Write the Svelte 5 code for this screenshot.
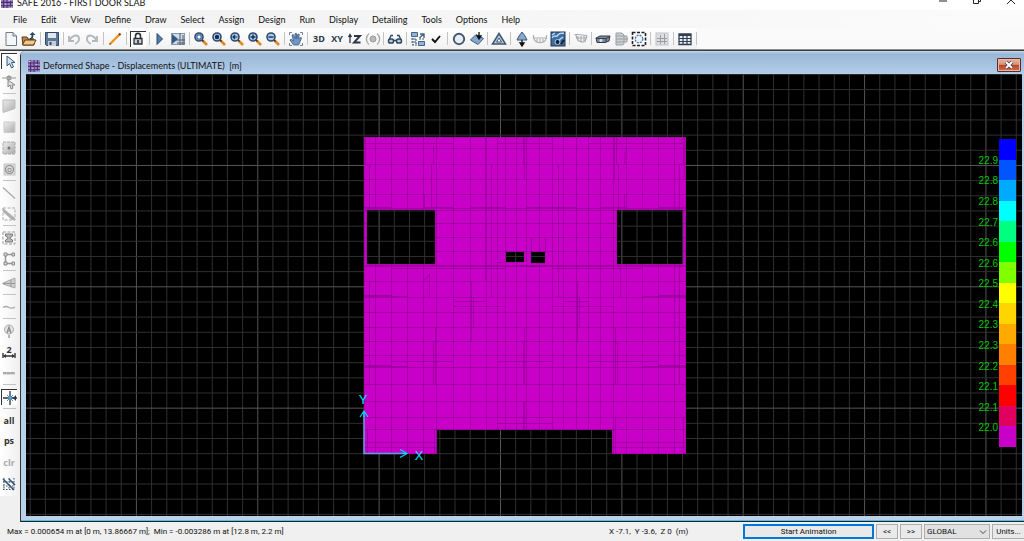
<script lang="ts">
	const menus = [
		'File', 'Edit', 'View', 'Define', 'Draw', 'Select', 'Assign', 'Design',
		'Run', 'Display', 'Detailing', 'Tools', 'Options', 'Help'
	];

	const lens = (inner: string) =>
		`<path d="M9.5 9.5L14 14" stroke="#e08a1e" stroke-width="2.6"/><path d="M8.5 8.5l2 2" stroke="#333" stroke-width="1.6"/><circle cx="6" cy="6" r="4" fill="#a9cdf0" stroke="#33476b" stroke-width="1.6"/>${inner}`;
	const word = (text: string, y: number, fill = '#2b3648', size = 9) =>
		`<text x="8" y="${y}" text-anchor="middle" font-family="Open Sans, sans-serif" font-weight="700" font-size="${size}" fill="${fill}">${text}</text>`;

	const icons: { [key: string]: string } = {
		grid: '<rect width="16" height="16" fill="#9a83bd"/><path d="M0 4h16M0 8.500h16M0 13h16M3.500 0v16M8 0v16M12.500 0v16" stroke="#4c2c72" stroke-width="1.400"/><path d="M1 2h3M10 6h3M5 11h3M11 15h4" stroke="#d7c9ea"/>',
		page: '<path d="M3 1.500h7l3.500 3.500v9.500H3z" fill="#f4f6f8" stroke="#6f7b88"/><path d="M10 1.500V5h3.500" fill="#cfd6de" stroke="#6f7b88"/>',
		open: '<path d="M1 6h5l1 2h6v6H2z" fill="#c48a45" stroke="#5b3b17"/><path d="M1.500 14L4 9h11l-2.500 5z" fill="#f3c987" stroke="#5b3b17"/><path d="M9 8c2 0 2.500-2 2.500-4" fill="none" stroke="#27465f" stroke-width="1.800"/><path d="M8.500 4L11.500 1l3 3z" fill="#27465f"/>',
		save: '<path d="M1.500 1.500h13v13h-12l-1-1z" fill="#5d7896" stroke="#33475f"/><path d="M4 2h8v5H4z" fill="#dfe8f0"/><path d="M4 10h8v5H4z" fill="#c3ced9"/><path d="M5.500 11h2v3h-2z" fill="#33475f"/>',
		undo: '<path d="M3 5v5h5M3.500 9.500C6 4 12 3 13 7c.6 3-2 5-4 6" fill="none" stroke="#b3b6ba" stroke-width="1.800"/>',
		redo: '<path d="M13 5v5H8M12.500 9.500C10 4 4 3 3 7c-.6 3 2 5 4 6" fill="none" stroke="#b3b6ba" stroke-width="1.800"/>',
		pencil: '<path d="M3 13L12.500 3.500" stroke="#ef9420" stroke-width="2.400"/><path d="M12 4l1.500-1.500" stroke="#8a3b20" stroke-width="2.400"/><path d="M2 14l2-1-1-1z" fill="#222"/>',
		lock: '<path d="M5.500 8V5c0-3.500 5-3.500 5 0v3" fill="none" stroke="#2b3038" stroke-width="1.600"/><path d="M4 7.500h8v5.500H4z" fill="#c9ccd0" stroke="#2b3038" stroke-width="1.300"/><path d="M8 9v3" stroke="#2b3038" stroke-width="1.600"/>',
		run: '<path d="M5 2.500l5.500 5.500L5 13.500z" fill="#4d7dad" stroke="#27496d"/>',
		runMesh: '<rect x="1.500" y="2.500" width="13" height="11" fill="#cfdbe8" stroke="#8496a8"/><path d="M10 2v12M6 9h9M13 4v10M7 12h8" stroke="#4a5b6e"/><path d="M2 3l6 5-6 5z" fill="#34587d"/>',
		zoomBox: lens('<path d="M4 4h4v4H4z" fill="#fff" stroke="#1d4f8b"/>'),
		zoomFull: lens('<circle cx="6" cy="6" r="2.200" fill="#142b4d"/>'),
		zoomBack: lens('<path d="M8.500 6H4M6 4L4 6l2 2" stroke="#16304f" fill="none" stroke-width="1.200"/>'),
		zoomIn: lens('<path d="M3.500 6h5M6 3.500v5" stroke="#16304f" stroke-width="1.400"/>'),
		zoomOut: lens('<path d="M3.500 6h5" stroke="#16304f" stroke-width="1.400"/>'),
		pan: '<path d="M1.500 4V1.500H4M12 1.500h2.500V4M14.500 12v2.500H12M4 14.500H1.500V12" fill="none" stroke="#77818c"/><path d="M5.500 14L2 9l1.200-.8L5.500 10 4 4l1.300-.4L7 7.500V2.500h1.500v5L10 3l1.300.4-.8 4.800L12.500 6l1 1L11.500 12l-1 2z" fill="#6f96c4" stroke="#3c5b84" stroke-width=".8"/>',
		three: word('3D', 11),
		xy: word('XY', 11),
		nz: '<path d="M3 12V4M1.500 6L3 3.500 4.500 6" fill="none" stroke="#2b3648" stroke-width="1.300"/><path d="M7 5h6l-6 6.500h6.500" fill="none" stroke="#2b3648" stroke-width="1.900"/>',
		rotate: '<path d="M4 2.500c-3.500 3-3.500 8 0 11M12 2.500c3.500 3 3.500 8 0 11" fill="none" stroke="#aaa" stroke-width="1.400"/><circle cx="8" cy="8" r="3" fill="#b9b9b9" stroke="#999"/>',
		glasses: '<path d="M2 9l2-4.500h2M14 9l-2-4.500h-2" fill="none" stroke="#31465f" stroke-width="1.400"/><path d="M6.500 9.500h3" stroke="#31465f" stroke-width="1.600"/><rect x="1.500" y="8" width="5" height="4" rx="1.800" fill="#b6cde4" stroke="#31465f" stroke-width="1.500"/><rect x="9.500" y="8" width="5" height="4" rx="1.800" fill="#b6cde4" stroke="#31465f" stroke-width="1.500"/>',
		objects: '<path d="M1.500 1.500h6v4h-6zM8.500 10.500h6v4h-6z" fill="#8fb4dc" stroke="#49637f"/><path d="M9.500 7l4-4M10 3h4v4" fill="none" stroke="#49637f" stroke-width="1.400"/><path d="M1 8h5M1 11h5M2 14h5M3 7v7M9 8h6M6 8v5" stroke="#49637f" stroke-width="1.200" stroke-dasharray="2 1"/>',
		check: '<path d="M4 8l3 3 5-6" fill="none" stroke="#111" stroke-width="1.900"/>',
		circle: '<circle cx="8" cy="8" r="5.200" fill="#e4edf6" stroke="#46586c" stroke-width="1.900"/>',
		slab: '<path d="M1.500 9L7 3.500l7.500 4L9 13.500z" fill="#86a9d1" stroke="#3f5d80"/><path d="M10 1v5M8 5l2 3 2-3z" fill="#111" stroke="#111" stroke-width="1.300"/>',
		triangle: '<path d="M8 2.500L14.500 13h-13z" fill="#b9cde2" stroke="#3f5670" stroke-width="1.500"/><path d="M8 7l2.500 4h-5z" fill="#fff" stroke="#3f5670"/>',
		reaction: '<path d="M8 1l3 4 2 4H3l2-4z" fill="#86a9d1" stroke="#3f5670"/><path d="M8 9v5M6 12l2 3 2-3z" fill="#111" stroke="#111" stroke-width="1.300"/>',
		moment: '<path d="M1.500 4v4M14.500 4v4M1 7h14M2 8c2 5 10 5 12 0M5 8v2.500M8 8v4M11 8v2.500" fill="none" stroke="#a9adb1" stroke-width="1.100"/>',
		contour: '<rect x="1" y="1" width="14" height="14" fill="#426c9d" stroke="#24374e"/><path d="M2 7c2-4 4 0 6-3s4-1 6-2M2 4l3-2M9 9l4-3" fill="none" stroke="#b7dcf6" stroke-width="1.400"/><circle cx="7.500" cy="11" r="2.500" fill="#0f2038" stroke="#a8d0ef"/><path d="M11 13l3-4" stroke="#0f2038" stroke-width="2"/>',
		strip: '<path d="M1.500 3.500h3l9 1v3M3 4c1 6 4 8 9 6.500l2-6M5 5v5M8 5v6M11 5v5M3 7h11" fill="none" stroke="#a9adb1" stroke-width="1.200"/>',
		beam: '<path d="M1 7l4-2h10l-1 5-4 1.500H2z" fill="#7d8c9c" stroke="#333d49"/><path d="M1 7.500h10l4-2M11 7.500v4" fill="none" stroke="#333d49"/><circle cx="6" cy="9.500" r="1.400" fill="#dce6ef"/>',
		stack: '<path d="M3 2h6l2 2v9l-2 1H3zM3 5h8M3 8h12M3 11h8M11 5h3v6h-3" fill="#cdd0d3" stroke="#9b9fa3"/>',
		region: '<rect x="1.500" y="1.500" width="13" height="13" fill="#fff" stroke="#222" stroke-width="1.600" stroke-dasharray="3 1.500"/><circle cx="8" cy="8" r="3.800" fill="#eaf2fb" stroke="#4b77b0" stroke-width="1.300" stroke-dasharray="2 1"/>',
		slabGrid: '<rect x="2" y="2" width="12" height="12" fill="#dcdee0" stroke="#c0c3c6"/><path d="M6.500 4v9M10.500 3v10M3 7.500h10M3 10.500h10" stroke="#999da1"/>',
		table: '<path d="M2 3h12v10.500H2z" fill="#e6edf5" stroke="#2f3f50" stroke-width="1.300"/><path d="M2 4h12" stroke="#2f3f50" stroke-width="2"/><path d="M2 7.500h12M2 10.500h12M6 4v9M10 4v9" stroke="#2f3f50" stroke-width="1.200"/>',

		pointer: '<path d="M5 2v10l2.500-2.500 2 4.500 2-1-2-4.500H13z" fill="#cfe3f7" stroke="#3d5878"/>',
		reshape: '<path d="M1 4h14M8 1v3M6 2.500h4v3H6z" fill="#ccc" stroke="#999"/><path d="M7 6v7l2-2 1 4 2-1-1-3h3z" fill="#ddd" stroke="#888"/>',
		quad: '<path d="M2 2h12v8.500L2 14.500z" fill="url(#side-fade)" stroke="#bbb"/>',
		rect: '<path d="M3 3h11v10.500H3z" fill="url(#side-fade)" stroke="#ccc"/>',
		rectDot: '<rect x="2" y="2" width="12" height="12" fill="url(#side-fade)" stroke="#aaa" stroke-dasharray="3 1"/><circle cx="8" cy="8" r="1.500" fill="#777"/>',
		rectCircle: '<rect x="3" y="3" width="11" height="11" fill="#d8d8d8" stroke="#c4c4c4"/><circle cx="8.500" cy="8.500" r="4" fill="none" stroke="#8d8d8d" stroke-width="1.200"/><path d="M7 7.500h3v3H7z" fill="none" stroke="#999"/>',
		line: '<path d="M2 2.500l12 11" stroke="#aaa" stroke-width="1.300"/>',
		lineBox: '<path d="M2 2h12v12H2z" fill="none" stroke="#aaa" stroke-dasharray="3 1.500"/><path d="M2 2l12 10v2h-3L2 6z" fill="#b0b0b0"/>',
		column: '<path d="M2 2h12v12H2z" fill="none" stroke="#999" stroke-dasharray="3 1.500"/><path d="M4.500 4h7v2L9 7.500v1L11.500 10v2h-7v-2L7 8.500v-1L4.500 6z" fill="#bbb" stroke="#777"/>',
		frame: '<path d="M4.500 3.500v9M4.500 3.500h8M4.500 12.500h8" fill="none" stroke="#999" stroke-width="1.500"/><path d="M3 2h3v3H3zM3 11h3v3H3zM11 2h2.500v3H11zM11 11h2.500v3H11z" fill="#ddd" stroke="#888"/>',
		wedge: '<path d="M2 8l12-5v10L2 9z" fill="#d0d0d0" stroke="#aaa"/><path d="M10 5v7M2 8.500h12" stroke="#999"/>',
		curve: '<path d="M2 8.500c3-2 4-1 6 0s4 1 6-.5" fill="none" stroke="#aaa" stroke-width="1.300"/>',
		label: '<circle cx="8" cy="6.500" r="4.500" fill="#e4e4e4" stroke="#aaa"/><path d="M6 10l2-6 2 6M6.500 8h3M8 12v3" fill="none" stroke="#888" stroke-width="1.200"/>',
		dim: word('2', 9, '#333') + '<path d="M2 9v5M14 9v5M3 12h10" stroke="#333" stroke-width="1.400"/><path d="M5 10l-3 2 3 2zM11 10l3 2-3 2z" fill="#333"/>',
		dashes: '<path d="M2 7h12v2.500H2z" fill="#bbb"/><path d="M2 8h12" stroke="#999" stroke-dasharray="3 1"/>',
		snap: '<path d="M8 1v14M1 8h14" stroke="#333" stroke-width="1.300"/><path d="M5 5l6 6M11 5l-6 6" stroke="#4c90d0"/><circle cx="8" cy="8" r="1.800" fill="#56a2df"/><path d="M14 5v6l-3-3z" fill="#21364f"/>',
		all: word('all', 11, '#333'),
		ps: word('ps', 10, '#333'),
		clr: word('clr', 11, '#aaa'),
		hatch: '<path d="M2 3l11 11M8 3l6 6" stroke="#34506f" stroke-width="1.500"/><path d="M2 6h12M2 10h12M2 13.500h12M3 2v12M8 2v12M13 2v12" stroke="#34506f" stroke-dasharray="1.500 1.500"/>'
	};

	const toolbar = [
		['page', 'open'], ['save'], ['undo', 'redo'], ['pencil'], ['lock'], ['run', 'runMesh'],
		['zoomBox', 'zoomFull', 'zoomBack', 'zoomIn', 'zoomOut'], ['pan'],
		['three', 'xy', 'nz', 'rotate'], ['glasses'], ['objects', 'check'], ['circle', 'slab'],
		['triangle'], ['reaction', 'moment', 'contour'], ['strip'], ['beam', 'stack', 'region'],
		['slabGrid'], ['table']
	];

	const sidebar = [
		['pointer', 'reshape'], ['quad', 'rect', 'rectDot', 'rectCircle'], ['line', 'lineBox'],
		['column', 'frame'], ['wedge'], ['curve'], ['label', 'dim', 'dashes'], ['snap'],
		['all', 'ps', 'clr', 'hatch']
	];

	const pressed = ['lock', 'pointer', 'snap'];

	// background grid, a heavier line every 8 cells
	const cell = 15.17;
	const range = (from: number, to: number) => Array.from({ length: to - from + 1 }, (_, i) => from + i);
	const gridX = range(-60, 60).map((i) => ({ at: 500.5 + i * cell, major: i % 8 === 0 }));
	const gridY = range(-40, 40).map((i) => ({ at: 286.8 + i * cell, major: i % 8 === 0 }));

	const slab =
		'M364 137H686V454H612V430H437V454H364Z' +
		'M367 210V264H435V210Z M617 210V264H683V210Z' +
		'M506 252V262H524V252Z M531 252V263H545V252Z';

	const meshX = [
		375, 391, 407, 423, 436, 453, 470, 486, 497, 505, 516, 526, 539, 552, 563, 576, 588, 600, 613,
		626, 642, 658, 674
	];
	const meshY = [
		148, 164, 179, 194, 210, 223, 237, 251, 265, 281, 297, 312, 327, 341, 355, 367, 384, 401, 417,
		429, 442, 447
	];
	// short local edges: x1, y1, x2, y2
	const edges = [
		[364, 143, 453, 143], [497, 143, 552, 143], [588, 143, 683, 143],
		[365, 137, 365, 164], [369, 164, 369, 210], [369, 281, 369, 384], [433, 146, 433, 164],
		[431, 164, 431, 207], [424, 194, 424, 207], [485, 137, 485, 281], [491, 164, 491, 297],
		[523, 137, 523, 164], [524, 137, 524, 179], [558, 164, 558, 297], [614, 137, 614, 179],
		[616, 137, 616, 164], [618, 164, 618, 210], [625, 150, 624, 164], [624, 194, 624, 210],
		[679, 164, 679, 210], [683, 137, 683, 164], [679, 264, 679, 384], [684, 137, 684, 179],
		[364, 207, 391, 207], [423, 207, 453, 207], [470, 207, 505, 207], [526, 207, 576, 207],
		[600, 207, 626, 207], [658, 207, 686, 207], [364, 208, 686, 208], [364, 266, 686, 266],
		[391, 268, 505, 268],
		[552, 268, 642, 268], [424, 280, 430, 273], [429, 273, 429, 297], [620, 265, 620, 297],
		[364, 295, 391, 295], [364, 296, 407, 296], [658, 295, 686, 295], [642, 296, 686, 296],
		[453, 301, 486, 301], [453, 306, 505, 306], [564, 301, 588, 301], [552, 306, 612, 306],
		[471, 281, 471, 341], [473, 297, 473, 327], [577, 281, 577, 341], [579, 297, 579, 327],
		[391, 361, 453, 361], [497, 361, 552, 361], [588, 361, 658, 361], [364, 365, 391, 365],
		[364, 366, 407, 366], [658, 365, 686, 365], [642, 366, 686, 366], [433, 341, 433, 384],
		[435, 327, 435, 384], [523, 341, 523, 384], [524, 327, 524, 384], [615, 327, 615, 384],
		[617, 341, 617, 384], [523, 401, 523, 429], [524, 401, 524, 429], [497, 423, 552, 423],
		[367, 429, 367, 454], [434, 429, 434, 454], [615, 417, 615, 454], [683, 417, 683, 454],
		[497, 262, 505, 262], [526, 266, 540, 266], [531, 237, 531, 252], [545, 237, 545, 252]
	];

	const bands = [
		'#0000ff', '#0055ff', '#00aaff', '#00ffff', '#00ff80', '#00ff00', '#80ff00', '#ffff00',
		'#ffd500', '#ffaa00', '#ff8000', '#ff4000', '#ff0000', '#e0005f', '#c800c8'
	];
	const levels = [
		'22.9', '22.8', '22.8', '22.7', '22.6', '22.6', '22.5', '22.4', '22.3', '22.3', '22.2',
		'22.1', '22.1', '22.0'
	];

	let system = $state('GLOBAL');
</script>

{#snippet icon(name: string)}
	<svg class="icon" viewBox="0 0 16 16" aria-hidden="true">{@html icons[name]}</svg>
{/snippet}

<div class="app">
	<svg class="defs" aria-hidden="true">
		<defs>
			<linearGradient id="side-fade" x1="0" y1="0" x2="1" y2="1">
				<stop offset="0" stop-color="#eee" />
				<stop offset="1" stop-color="#aaa" />
			</linearGradient>
		</defs>
	</svg>

	<header class="titlebar">
		{@render icon('grid')}
		<span class="title">SAFE 2016 - FIRST DOOR SLAB</span>
		<div class="controls">
			<button aria-label="Minimize"><svg viewBox="0 0 10 10"><path d="M1 6h8" /></svg></button>
			<button aria-label="Restore"><svg viewBox="0 0 10 10"><path d="M1.500 3.500h5v5h-5zM3.500 3V1.500h5v5H7" /></svg></button>
			<button aria-label="Close"><svg viewBox="0 0 10 10"><path d="M1 1l8 8M9 1L1 9" /></svg></button>
		</div>
	</header>

	<nav class="menubar">
		{#each menus as menu}
			<button>{menu}</button>
		{/each}
	</nav>

	<div class="toolrow">
		<div class="toolbar">
			{#each toolbar as group}
				<div class="group">
					{#each group as name}
						<button class="tool" class:pressed={pressed.includes(name)} aria-label={name}>
							{@render icon(name)}
						</button>
					{/each}
				</div>
				<i class="sep"></i>
			{/each}
		</div>
	</div>

	<main>
		<aside>
			<div class="sidebar">
				{#each sidebar as group, i}
					{#if i > 0}<i class="rule"></i>{/if}
					<div class="group">
						{#each group as name}
							<button class="tool" class:pressed={pressed.includes(name)} aria-label={name}>
								{@render icon(name)}
							</button>
						{/each}
					</div>
				{/each}
			</div>
		</aside>

		<section class="window">
			<div class="caption">
				{@render icon('grid')}
				<h1>Deformed Shape - Displacements (ULTIMATE)&nbsp; [m]</h1>
				<button class="close" aria-label="Close view">
					<svg viewBox="0 0 10 10">
						<path d="M2 2l6 6M8 2l-6 6" stroke="#4a3b48" stroke-width="3.600" />
						<path d="M2 2l6 6M8 2l-6 6" stroke="#fff" stroke-width="2" />
					</svg>
				</button>
			</div>

			<div class="view">
				<svg class="plot" viewBox="26 74 996 442" preserveAspectRatio="xMidYMid slice">
					{#each gridX as line}
						<line class="grid" class:major={line.major} x1={line.at} x2={line.at} y1="-300" y2="900" />
					{/each}
					{#each gridY as line}
						<line class="grid" class:major={line.major} y1={line.at} y2={line.at} x1="-400" x2="1400" />
					{/each}

					<clipPath id="slab-clip"><path d={slab} clip-rule="evenodd" /></clipPath>
					<path d={slab} fill="#c800c8" fill-rule="evenodd" />
					<g class="mesh" clip-path="url(#slab-clip)">
						{#each meshX as x}
							<line x1={x + 0.5} x2={x + 0.5} y1="137" y2="454" />
						{/each}
						{#each meshY as y}
							<line y1={y + 0.5} y2={y + 0.5} x1="364" x2="686" />
						{/each}
						{#each edges as [x1, y1, x2, y2]}
							<line x1={x1 + 0.5} y1={y1 + 0.5} x2={x2 + 0.5} y2={y2 + 0.5} />
						{/each}
						<path d={slab} fill="none" />
					</g>

					<path class="axis" d="M364 411V453.500H406" />
					<path class="arrow" d="M360 417L364 411L368 417M400 449.500L407 453.500L400 457.500" />
					<path class="arrow" d="M364 411v6M407 453.500h-6" />
					<text class="axis-name" x="363" y="404">Y</text>
					<text class="axis-name" x="419" y="460">X</text>
				</svg>

				<div class="legend">
					<div class="levels">
						{#each levels as level}
							<span>{level}</span>
						{/each}
					</div>
					<div class="bands">
						{#each bands as band}
							<i style="background: {band}"></i>
						{/each}
					</div>
				</div>
			</div>
		</section>
	</main>

	<footer>
		<span class="range">Max = 0.000654 m at [0 m, 13.86667 m];&nbsp; Min = -0.003286 m at [12.8 m, 2.2 m]</span>
		<span class="coords">X -7.1,&nbsp; Y -3.6,&nbsp; Z 0&nbsp; (m)</span>
		<button class="start">Start Animation</button>
		<button class="step">&lt;&lt;</button>
		<button class="step">&gt;&gt;</button>
		<label class="system">
			<select bind:value={system} aria-label="Coordinate system">
				<option>GLOBAL</option>
			</select>
			<svg viewBox="0 0 8 8" aria-hidden="true"><path d="M1 2.500l3 3 3-3" /></svg>
		</label>
		<button class="units">Units...</button>
	</footer>
</div>

<style>
	:global(body) {
		margin: 0;
		overflow: hidden;
	}

	.app {
		display: flex;
		flex-direction: column;
		height: 100vh;
		overflow: hidden;
		background: #f0f0f0;
		color: #111;
		font-family: Lato, sans-serif;
		font-size: 9px;
	}

	.defs {
		position: absolute;
		width: 0;
		height: 0;
	}

	button,
	select {
		margin: 0;
		padding: 0;
		border: 0;
		background: none;
		color: inherit;
		font: inherit;
	}

	.icon {
		display: block;
		flex: none;
		width: 16px;
		height: 16px;
		overflow: visible;
	}

	.titlebar {
		display: flex;
		align-items: flex-end;
		flex: none;
		height: 10px;
		padding-left: 1px;
		overflow: hidden;
		background: #fff;
	}

	.titlebar .icon {
		width: 12px;
		height: 12px;
		margin: 0 4px 2px 0;
	}

	.title {
		flex: 1;
		line-height: 14px;
	}

	.controls {
		display: flex;
		gap: 24px;
		padding: 0 8px 5px 0;
	}

	.controls svg,
	.close svg {
		display: block;
		width: 10px;
		height: 10px;
		fill: none;
	}

	.controls svg {
		stroke: #222;
	}

	.menubar {
		display: flex;
		flex: none;
		gap: 14px;
		height: 18px;
		padding-left: 13px;
		background: linear-gradient(90deg, #f1f1f1, #fbfbfb);
	}

	.toolrow {
		flex: none;
		height: 21px;
		border-bottom: 1px solid #8c8c8c;
		background: #fafafa;
	}

	.toolbar {
		display: flex;
		justify-content: space-between;
		align-items: center;
		width: 694px;
		height: 21px;
		padding-left: 3px;
		background: linear-gradient(#fff, #f1f1f1);
	}

	.group {
		display: flex;
		gap: 2px;
	}

	.sep {
		width: 1px;
		height: 13px;
		background: #c4c4c4;
	}

	.tool {
		display: flex;
		justify-content: center;
		align-items: center;
		box-sizing: border-box;
		width: 16px;
		height: 16px;
	}

	.tool.pressed {
		border-top: 1px solid #333;
		border-left: 1px solid #333;
		background: #fff;
	}

	main {
		display: flex;
		flex: 1;
		min-height: 0;
		border-top: 1px solid #3c3c3c;
	}

	aside {
		flex: none;
		width: 20px;
	}

	.sidebar {
		display: flex;
		flex-direction: column;
		align-items: center;
		width: 16px;
		padding: 2px 1px 4px;
		background: linear-gradient(90deg, #fff, #f1f1f1);
	}

	.sidebar .group {
		flex-direction: column;
		gap: 5px;
	}

	.rule {
		width: 13px;
		height: 1px;
		margin: 3px 0 4px;
		background: #c4c4c4;
	}

	.window {
		display: flex;
		flex-direction: column;
		flex: 1;
		min-width: 0;
		border-left: 1px solid #333;
		border-bottom: 1px solid #222;
		border-top-left-radius: 5px;
		background: #b9d1ea;
		box-shadow: inset 0 -1px #4cc6e6;
	}

	.caption {
		display: flex;
		align-items: center;
		flex: none;
		height: 23px;
		padding: 0 3px 0 7px;
		border-top-left-radius: 4px;
		background: linear-gradient(#c3d7ec, #9bb7d7 3px, #b2cde9);
	}

	.caption .icon {
		width: 12px;
		height: 12px;
		margin: 6px 3px 0 0;
	}

	h1 {
		flex: 1;
		margin: 6px 0 0;
		font-size: 9px;
		font-weight: 400;
		line-height: 14px;
	}

	.close {
		display: flex;
		justify-content: center;
		align-items: center;
		box-sizing: border-box;
		width: 24px;
		height: 14px;
		margin-top: 5px;
		border: 1px solid #5c2a2c;
		border-radius: 1px;
		background: linear-gradient(#e3b9a3, #d99478 45%, #b9442c 50%, #cf6f50);
		box-shadow: inset 0 0 0 1px #e6b9a4;
	}

	.view {
		position: relative;
		flex: 1;
		min-height: 0;
		margin: 0 2px 5px 5px;
		background: #000;
	}

	.plot {
		display: block;
		width: 100%;
		height: 100%;
	}

	.grid {
		stroke: #303030;
	}

	.grid.major {
		stroke: #555;
	}

	.mesh {
		stroke: #8c008f;
		stroke-opacity: 0.6;
	}

	.axis {
		fill: none;
		stroke: #55a5e6;
		stroke-width: 1.5;
	}

	.arrow {
		fill: none;
		stroke: #00d8ff;
		stroke-width: 1.2;
	}

	.axis-name {
		fill: #00e1ff;
		font-family: 'Liberation Sans', sans-serif;
		font-size: 13px;
		text-anchor: middle;
	}

	.legend {
		position: absolute;
		top: 65px;
		right: 6px;
		display: flex;
		gap: 1px;
		height: 308px;
	}

	.levels,
	.bands {
		display: flex;
		flex-direction: column;
	}

	.levels {
		padding: 11px 0 9px;
		color: #00c800;
		font-family: 'Liberation Sans', sans-serif;
		font-size: 10px;
	}

	.levels span {
		display: flex;
		align-items: center;
		flex: 1;
	}

	.bands {
		width: 17px;
	}

	.bands i {
		flex: 1;
	}

	footer {
		display: flex;
		align-items: center;
		flex: none;
		height: 19px;
		padding-left: 7px;
		font-family: Roboto, sans-serif;
		font-size: 8px;
		white-space: nowrap;
	}

	.range {
		flex: 1;
	}

	.coords {
		width: 134px;
	}

	footer button,
	select {
		box-sizing: border-box;
		height: 15px;
		border: 1px solid #adadad;
		background: #e9e9e9;
	}

	footer .start {
		width: 131px;
		margin-right: 2px;
		border: 2px solid #0078d7;
	}

	.step {
		width: 22px;
		margin-right: 2px;
	}

	.system {
		position: relative;
	}

	select {
		display: block;
		appearance: none;
		width: 66px;
		padding-left: 2px;
		border-radius: 0;
		background: #e1e1e1;
	}

	.system svg {
		position: absolute;
		top: 4px;
		right: 3px;
		width: 8px;
		height: 8px;
		fill: none;
		stroke: #444;
		pointer-events: none;
	}

	footer .units {
		width: 32px;
		margin-left: 2px;
		border-right: 0;
	}
</style>
